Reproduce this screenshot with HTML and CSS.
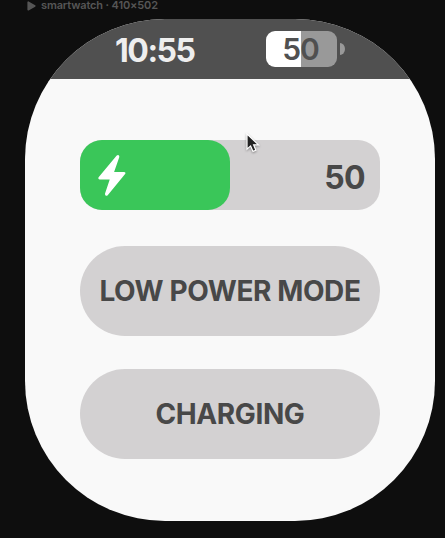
FILE: index.html
```html
<!DOCTYPE html>
<html lang="en">
<head>
<meta charset="utf-8">
<title>smartwatch</title>
<link rel="stylesheet" href="styles.css">
</head>
<body>
<div class="frame-label">
  <svg class="play" viewBox="0 0 9 10"><path d="M1.2 1.2v7.6L7.8 5z"/></svg>
  <span>smartwatch · 410×502</span>
</div>
<main class="watch">
  <header class="status">
    <span class="time">10:55</span>
    <div class="battery">
      <div class="battery-body"><span>50</span></div>
      <div class="battery-cap"></div>
    </div>
  </header>
  <section class="controls">
    <div class="meter">
      <div class="meter-fill">
        <svg class="bolt" viewBox="0 0 29 43"><path d="M20.2 2.2 2.3 23.8Q2 24.5 2.7 24.5H14L8.9 39.8Q8.8 41.2 10 40.6L27.4 19.5Q27.8 18.8 27 18.8H15.9L21.4 3Q21.6 1.5 20.2 2.2Z"/></svg>
      </div>
      <span class="meter-value">50</span>
    </div>
    <button class="pill">LOW POWER MODE</button>
    <button class="pill">CHARGING</button>
  </section>
</main>
<svg class="cursor" viewBox="0 0 18 24"><path d="M3 2v15.2l3.6-3.3 2.4 5.5 2.9-1.2-2.3-5.4h4.9z"/></svg>
</body>
</html>
```
FILE: styles.css
```css
* {
  box-sizing: border-box;
}

body {
  margin: 0;
  height: 538px;
  overflow: hidden;
  background: #0e0e0e;
  font-family: Inter, "Liberation Sans", sans-serif;
}

.frame-label {
  display: flex;
  align-items: center;
  gap: 5px;
  height: 11px;
  margin-bottom: 8px;
  padding-left: 27px;
  color: #565656;
  font-size: 11px;
  font-weight: 600;
  letter-spacing: -0.14px;
  line-height: 11px;
}

.play {
  width: 9px;
  height: 10px;
  fill: #565656;
  stroke: #565656;
  stroke-width: 1.6;
  stroke-linejoin: round;
}

.watch {
  width: 410px;
  height: 502px;
  margin-left: 25px;
  overflow: hidden;
  border-radius: 140px;
  background: #f9f9f9;
}

.status {
  display: flex;
  align-items: center;
  justify-content: space-between;
  height: 60px;
  padding: 0 90px 0 90px;
  background: #505050;
}

.time {
  color: #eee;
  font-size: 32px;
  font-weight: 700;
  line-height: 60px;
  letter-spacing: -1.5px;
  padding-top: 3px;
}

.battery {
  display: flex;
  align-items: center;
  gap: 3px;
}

.battery-body {
  display: flex;
  align-items: center;
  justify-content: center;
  width: 71px;
  height: 36px;
  padding-right: 2px;
  border-radius: 9px;
  background: linear-gradient(90deg, #fff 35px, #999 35px);
  color: #505050;
  font-size: 30px;
  font-weight: 600;
  letter-spacing: -1px;
}

.battery-cap {
  width: 5px;
  height: 12px;
  border-radius: 0 5px 5px 0 / 0 6px 6px 0;
  background: #999;
}

.controls {
  display: flex;
  flex-direction: column;
  align-items: center;
  padding-top: 61px;
}

.meter {
  display: flex;
  align-items: center;
  justify-content: space-between;
  width: 300px;
  height: 70px;
  padding-right: 15px;
  margin-bottom: 36px;
  border-radius: 22px;
  background: #d3d1d2;
}

.meter-fill {
  display: flex;
  align-items: center;
  width: 150px;
  height: 70px;
  padding-left: 17px;
  border-radius: 22px;
  background: #3ac659;
}

.bolt {
  width: 29px;
  height: 43px;
  fill: #fff;
  stroke: #fff;
  stroke-width: 1.8;
  stroke-linejoin: round;
}

.meter-value {
  color: #484848;
  font-size: 32px;
  font-weight: 700;
  letter-spacing: -0.6px;
  padding-top: 4px;
}

.pill {
  width: 300px;
  height: 90px;
  margin: 0 0 33px;
  padding: 0;
  border: 0;
  border-radius: 45px;
  background: #d3d1d2;
  color: #484848;
  font-family: inherit;
  font-size: 28px;
  font-weight: 700;
  letter-spacing: -0.4px;
  white-space: nowrap;
}

.cursor {
  position: absolute;
  left: 244px;
  top: 132px;
  width: 18px;
  height: 24px;
  fill: #222;
  stroke: #fff;
  stroke-width: 1.2;
  filter: drop-shadow(0 1px 1px rgba(0, 0, 0, 0.35));
}
```
